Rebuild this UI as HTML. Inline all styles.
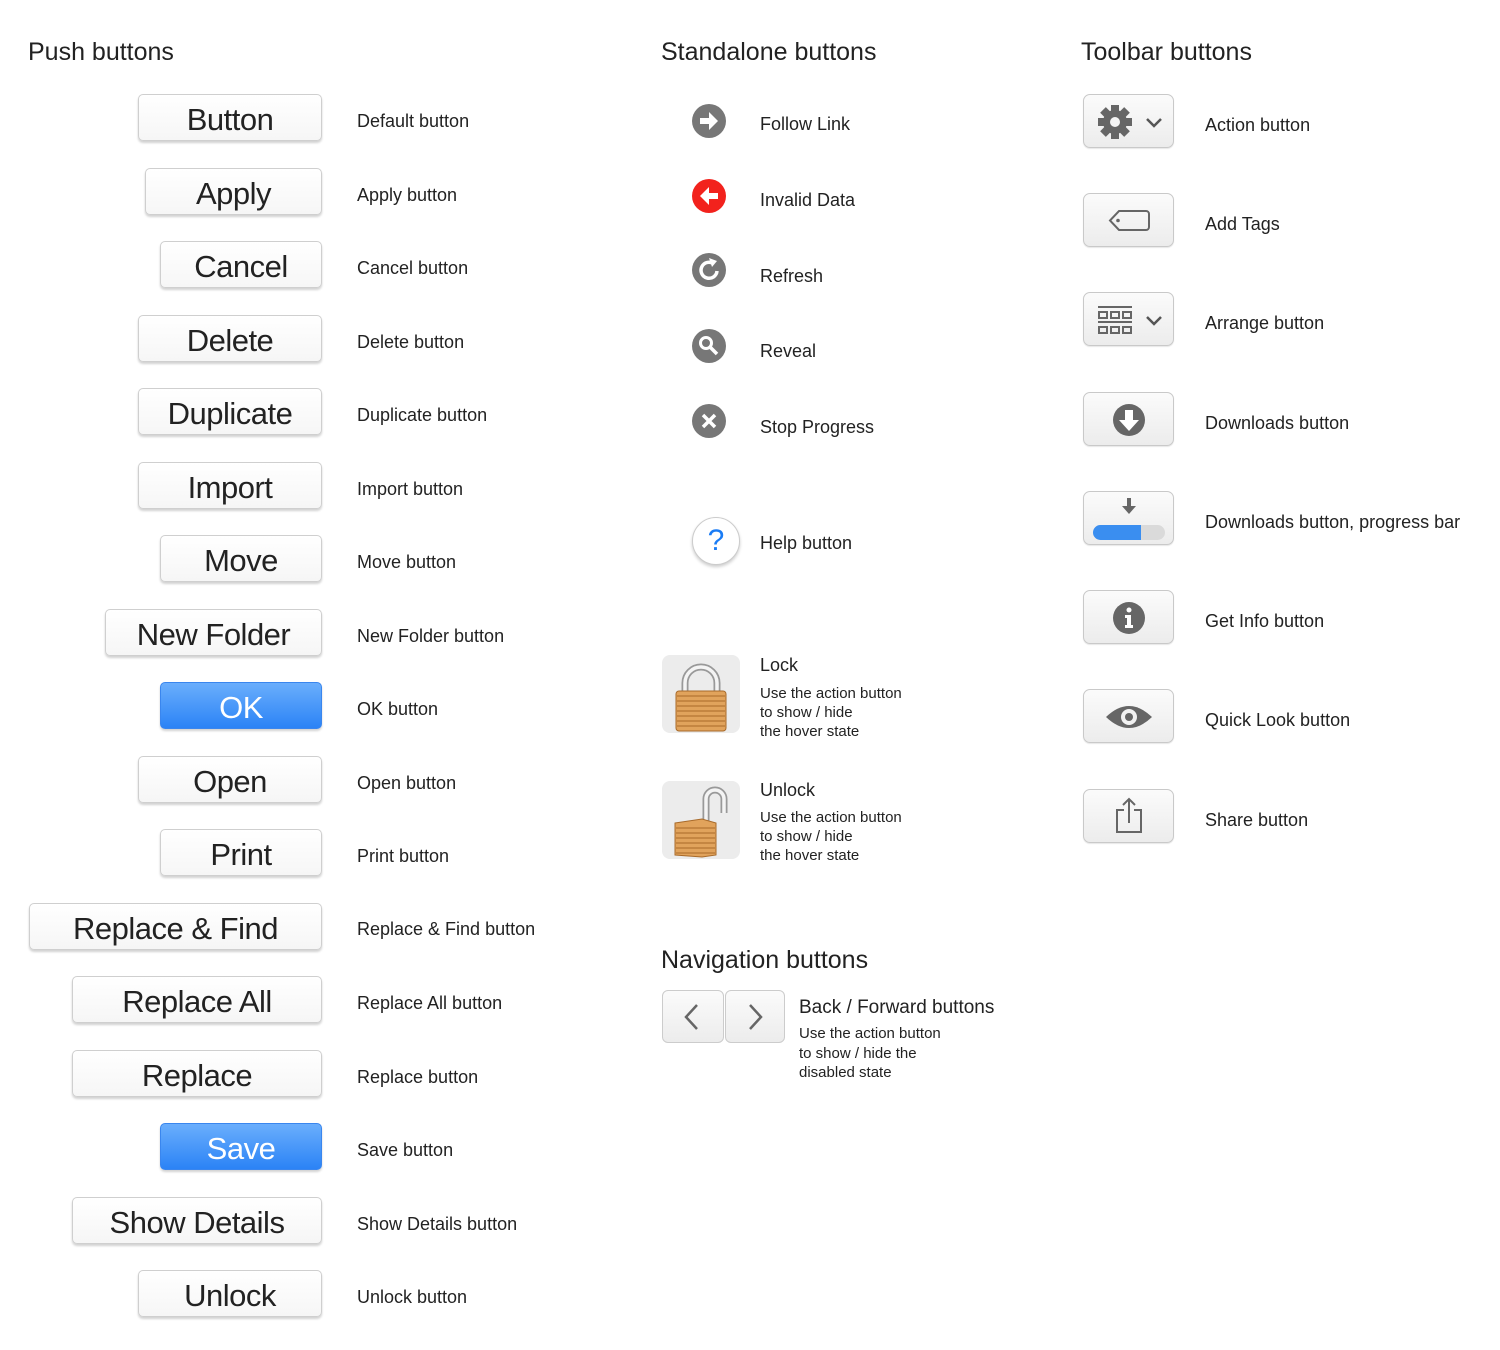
<!DOCTYPE html>
<html><head><meta charset="utf-8"><style>
*{margin:0;padding:0;box-sizing:border-box}
body{width:1500px;height:1350px;background:#fff;position:relative;font-family:"Liberation Sans",sans-serif;color:#222;overflow:hidden}
.a{position:absolute}
h2{position:absolute;font-weight:normal;font-size:25px;color:#222;white-space:nowrap}
.pb{position:absolute;height:47px;border:1px solid #cfcfcf;border-radius:5px;background:linear-gradient(#fff,#f6f6f6);box-shadow:0 2px 2px rgba(0,0,0,.18);font-size:31px;text-align:center;line-height:49px;color:#222;letter-spacing:-0.5px;right:1178px;white-space:nowrap}
.blue{background:linear-gradient(#6aaefc,#2b83f6);border-color:#3a86ee;color:#fff}
.lb{position:absolute;font-size:18px;left:357px;white-space:nowrap;color:#222}
.sl{position:absolute;font-size:18px;left:760px;white-space:nowrap}
.tb{position:absolute;left:1083px;width:91px;height:54px;border:1px solid #c9c9c9;border-radius:7px;background:linear-gradient(#fbfbfb,#ececec);box-shadow:0 1px 1px rgba(0,0,0,.1)}
.tl{position:absolute;left:1205px;font-size:18px;white-space:nowrap}
.sm{font-size:15px;line-height:19px}
</style></head><body>
<h2 style="left:28px;top:38px">Push buttons</h2>
<h2 style="left:661px;top:38px">Standalone buttons</h2>
<h2 style="left:1081px;top:38px">Toolbar buttons</h2>
<h2 style="left:661px;top:946px">Navigation buttons</h2>

<div class="pb" style="left:138px;top:94px">Button</div><div class="lb" style="top:111px">Default button</div>
<div class="pb" style="left:145px;top:168px">Apply</div><div class="lb" style="top:185px">Apply button</div>
<div class="pb" style="left:160px;top:241px">Cancel</div><div class="lb" style="top:258px">Cancel button</div>
<div class="pb" style="left:138px;top:315px">Delete</div><div class="lb" style="top:332px">Delete button</div>
<div class="pb" style="left:138px;top:388px">Duplicate</div><div class="lb" style="top:405px">Duplicate button</div>
<div class="pb" style="left:138px;top:462px">Import</div><div class="lb" style="top:479px">Import button</div>
<div class="pb" style="left:160px;top:535px">Move</div><div class="lb" style="top:552px">Move button</div>
<div class="pb" style="left:105px;top:609px">New Folder</div><div class="lb" style="top:626px">New Folder button</div>
<div class="pb blue" style="left:160px;top:682px">OK</div><div class="lb" style="top:699px">OK button</div>
<div class="pb" style="left:138px;top:756px">Open</div><div class="lb" style="top:773px">Open button</div>
<div class="pb" style="left:160px;top:829px">Print</div><div class="lb" style="top:846px">Print button</div>
<div class="pb" style="left:29px;top:903px">Replace &amp; Find</div><div class="lb" style="top:919px">Replace &amp; Find button</div>
<div class="pb" style="left:72px;top:976px">Replace All</div><div class="lb" style="top:993px">Replace All button</div>
<div class="pb" style="left:72px;top:1050px">Replace</div><div class="lb" style="top:1067px">Replace button</div>
<div class="pb blue" style="left:160px;top:1123px">Save</div><div class="lb" style="top:1140px">Save button</div>
<div class="pb" style="left:72px;top:1197px">Show Details</div><div class="lb" style="top:1214px">Show Details button</div>
<div class="pb" style="left:138px;top:1270px">Unlock</div><div class="lb" style="top:1287px">Unlock button</div>

<!-- standalone -->
<svg class="a" style="left:690px;top:102px" width="38" height="38" viewBox="0 0 38 38"><circle cx="19" cy="19" r="17" fill="#777"/><path d="M10 16h9v-6l9 9-9 9v-6h-9z" fill="#fff"/></svg>
<div class="sl" style="top:114px">Follow Link</div>
<svg class="a" style="left:690px;top:177px" width="38" height="38" viewBox="0 0 38 38"><circle cx="19" cy="19" r="17" fill="#f2221d"/><path d="M28 16h-9v-6l-9 9 9 9v-6h9z" fill="#fff"/></svg>
<div class="sl" style="top:190px">Invalid Data</div>
<svg class="a" style="left:690px;top:251px" width="38" height="38" viewBox="0 0 38 38"><circle cx="19" cy="19" r="17" fill="#777"/><path d="M24 13a8 8 0 1 0 3 7" stroke="#fff" stroke-width="3.5" fill="none"/><path d="M19 7l8 3-5 6z" fill="#fff"/></svg>
<div class="sl" style="top:266px">Refresh</div>
<svg class="a" style="left:690px;top:327px" width="38" height="38" viewBox="0 0 38 38"><circle cx="19" cy="19" r="17" fill="#777"/><circle cx="16" cy="16" r="5.5" stroke="#fff" stroke-width="3" fill="none"/><path d="M20 20l7 7" stroke="#fff" stroke-width="3.5"/></svg>
<div class="sl" style="top:341px">Reveal</div>
<svg class="a" style="left:690px;top:402px" width="38" height="38" viewBox="0 0 38 38"><circle cx="19" cy="19" r="17" fill="#777"/><path d="M13 13l12 12M25 13l-12 12" stroke="#fff" stroke-width="3.5"/></svg>
<div class="sl" style="top:417px">Stop Progress</div>
<div class="a" style="left:692px;top:517px;width:48px;height:48px;border-radius:50%;border:1px solid #ccc;background:#fff;box-shadow:0 2px 3px rgba(0,0,0,.2);color:#1a7cf5;font-size:30px;text-align:center;line-height:46px">?</div>
<div class="sl" style="top:533px">Help button</div>

<svg class="a" style="left:662px;top:655px" width="78" height="78" viewBox="0 0 78 78"><rect width="78" height="78" rx="8" fill="#ececec"/><path d="M23 36V28a16 16 0 0 1 32 0v8" stroke="#999" stroke-width="7" fill="none"/><path d="M23 36V28a16 16 0 0 1 32 0v8" stroke="#f4f4f4" stroke-width="3.5" fill="none"/><rect x="14" y="36" width="50" height="40" rx="3" fill="#e1a35c" stroke="#a86a2a"/><g stroke="#b57533" stroke-width="1.3"><path d="M15 41h48M15 46h48M15 51h48M15 56h48M15 61h48M15 66h48M15 71h48"/></g></svg>
<div class="sl" style="top:655px">Lock</div>
<div class="sl sm" style="top:684px">Use the action button<br>to show / hide<br>the hover state</div>
<svg class="a" style="left:662px;top:781px" width="78" height="78" viewBox="0 0 78 78"><rect width="78" height="78" rx="8" fill="#ececec"/><path d="M44 40V18a9 9 0 0 1 18 0v14" stroke="#999" stroke-width="7" fill="none"/><path d="M44 40V18a9 9 0 0 1 18 0v14" stroke="#f4f4f4" stroke-width="3.5" fill="none"/><path d="M13 42l27-4 14 4v32l-14 2-27-2z" fill="#e1a35c" stroke="#a86a2a"/><g stroke="#b57533" stroke-width="1.3"><path d="M14 47h39M14 52h39M14 57h39M14 62h39M14 67h39M14 72h39"/></g></svg>
<div class="sl" style="top:780px">Unlock</div>
<div class="sl sm" style="top:808px">Use the action button<br>to show / hide<br>the hover state</div>

<!-- nav -->
<div class="a" style="left:662px;top:990px;width:62px;height:53px;border:1px solid #ccc;border-radius:6px;background:linear-gradient(#fbfbfb,#ececec)"></div>
<div class="a" style="left:725px;top:990px;width:60px;height:53px;border:1px solid #ccc;border-radius:6px;background:linear-gradient(#fbfbfb,#ececec)"></div>
<svg class="a" style="left:662px;top:990px" width="124" height="53"><path d="M35 15l-11 12 11 12M88 15l11 12-11 12" stroke="#666" stroke-width="2.5" fill="none"/></svg>
<div class="a" style="left:799px;top:997px;font-size:19px">Back / Forward buttons</div>
<div class="a sm" style="left:799px;top:1024px;font-size:15px;line-height:19.5px">Use the action button<br>to show / hide the<br>disabled state</div>

<!-- toolbar -->
<div class="tb" style="top:94px"><svg width="91" height="54"><g transform="translate(31,27)" fill="#666"><circle r="12"/><g><rect x="-4" y="-17" width="8" height="34"/><rect x="-4" y="-17" width="8" height="34" transform="rotate(45)"/><rect x="-4" y="-17" width="8" height="34" transform="rotate(90)"/><rect x="-4" y="-17" width="8" height="34" transform="rotate(135)"/></g><circle r="5" fill="#f4f4f4"/></g><path d="M63 24l7 7 7-7" stroke="#555" stroke-width="2.5" fill="none"/></svg></div>
<div class="tl" style="top:115px">Action button</div>
<div class="tb" style="top:193px"><svg width="91" height="54"><path d="M35 17h27a3 3 0 0 1 3 3v13a3 3 0 0 1-3 3H35l-9-9.5z" stroke="#666" stroke-width="2" fill="none"/><circle cx="34" cy="26.5" r="1.8" fill="#666"/></svg></div>
<div class="tl" style="top:214px">Add Tags</div>
<div class="tb" style="top:292px"><svg width="91" height="54"><g stroke="#666" stroke-width="2" fill="none"><path d="M14 14h34M14 29h34"/><rect x="15" y="19" width="8" height="6"/><rect x="27" y="19" width="8" height="6"/><rect x="39" y="19" width="8" height="6"/><rect x="15" y="34" width="8" height="6"/><rect x="27" y="34" width="8" height="6"/><rect x="39" y="34" width="8" height="6"/><path d="M63 24l7 7 7-7" stroke="#555" stroke-width="2.5"/></g></svg></div>
<div class="tl" style="top:313px">Arrange button</div>
<div class="tb" style="top:392px"><svg width="91" height="54"><circle cx="45" cy="27" r="16" fill="#666"/><path d="M41 17h8v10h6l-10 11-10-11h6z" fill="#fff"/></svg></div>
<div class="tl" style="top:413px">Downloads button</div>
<div class="tb" style="top:491px"><svg width="91" height="54"><path d="M43 6h4v8h5l-7 8-7-8h5z" fill="#666"/><rect x="9" y="33" width="72" height="15" rx="7.5" fill="#dadada"/><path d="M16.5 33H57v15H16.5a7.5 7.5 0 0 1 0-15z" fill="#3a8ef0"/></svg></div>
<div class="tl" style="top:512px">Downloads button, progress bar</div>
<div class="tb" style="top:590px"><svg width="91" height="54"><circle cx="45" cy="27" r="16" fill="#666"/><circle cx="45" cy="19" r="2.5" fill="#fff"/><path d="M41 24h6v10h2v3h-8v-3h2v-7h-2z" fill="#fff"/></svg></div>
<div class="tl" style="top:611px">Get Info button</div>
<div class="tb" style="top:689px"><svg width="91" height="54"><path d="M22 27q23-22 46 0q-23 22-46 0z" fill="#666"/><circle cx="45" cy="27" r="8" fill="#f2f2f2"/><circle cx="45" cy="27" r="4" fill="#666"/></svg></div>
<div class="tl" style="top:710px">Quick Look button</div>
<div class="tb" style="top:789px"><svg width="91" height="54"><g stroke="#666" stroke-width="2" fill="none"><path d="M40 20h-7v22h24V20h-7"/><path d="M45 33V9M39 15l6-6 6 6"/></g></svg></div>
<div class="tl" style="top:810px">Share button</div>
</body></html>
